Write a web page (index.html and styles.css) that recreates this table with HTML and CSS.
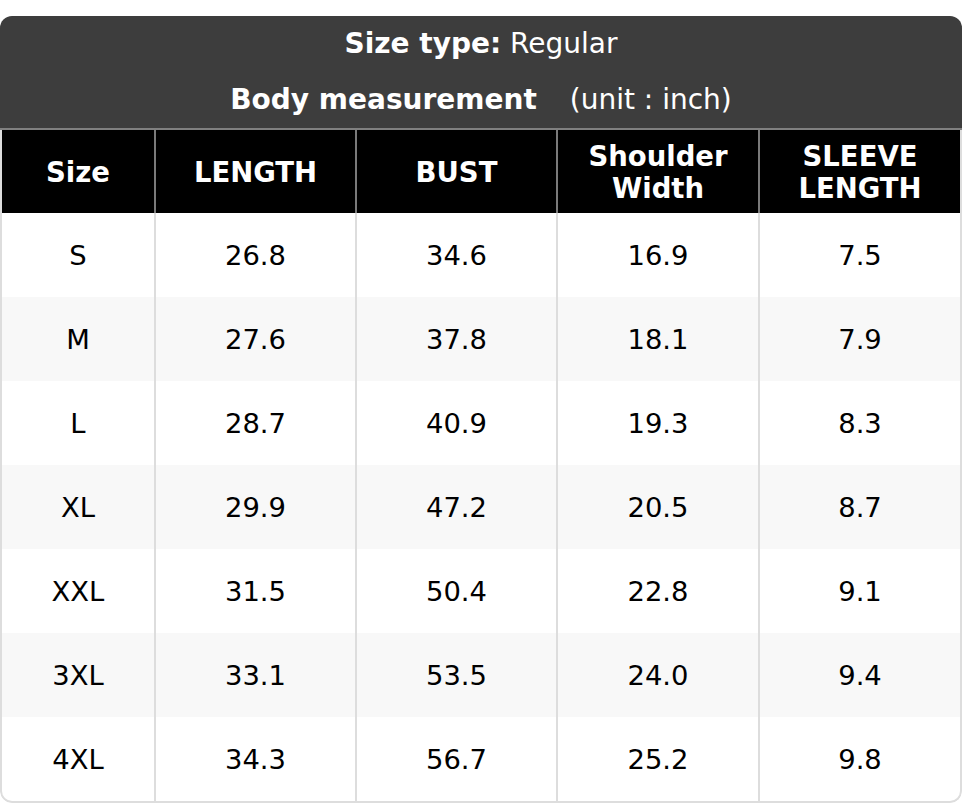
FILE: index.html
```html
<!DOCTYPE html>
<html lang="en">
<head>
<meta charset="utf-8">
<title>Size chart</title>
<link rel="stylesheet" href="styles.css">
</head>
<body>
<div class="chart">
  <div class="title">
    <div class="title-line"><b>Size type:</b> Regular</div>
    <div class="title-line"><b>Body measurement</b><span class="unit">(unit : inch)</span></div>
  </div>
  <div class="table-wrap">
    <table class="sizes">
      <colgroup>
        <col class="c-size">
        <col class="c-col">
        <col class="c-col">
        <col class="c-col-wide">
        <col class="c-col">
      </colgroup>
      <thead>
        <tr><th>Size</th><th>LENGTH</th><th>BUST</th><th>Shoulder<br>Width</th><th>SLEEVE<br>LENGTH</th></tr>
      </thead>
      <tbody>
        <tr><td>S</td><td>26.8</td><td>34.6</td><td>16.9</td><td>7.5</td></tr>
        <tr><td>M</td><td>27.6</td><td>37.8</td><td>18.1</td><td>7.9</td></tr>
        <tr><td>L</td><td>28.7</td><td>40.9</td><td>19.3</td><td>8.3</td></tr>
        <tr><td>XL</td><td>29.9</td><td>47.2</td><td>20.5</td><td>8.7</td></tr>
        <tr><td>XXL</td><td>31.5</td><td>50.4</td><td>22.8</td><td>9.1</td></tr>
        <tr><td>3XL</td><td>33.1</td><td>53.5</td><td>24.0</td><td>9.4</td></tr>
        <tr><td>4XL</td><td>34.3</td><td>56.7</td><td>25.2</td><td>9.8</td></tr>
      </tbody>
    </table>
  </div>
</div>
</body>
</html>
```
FILE: styles.css
```css
html, body {
  margin: 0;
  padding: 0;
  background: #ffffff;
}
body {
  padding-top: 16px;
  font-family: "DejaVu Sans", Verdana, sans-serif;
}
.chart {
  width: 962px;
  border-radius: 12px;
  overflow: hidden;
}
.title {
  background: #3d3d3d;
  color: #ffffff;
  text-align: center;
  font-size: 28px;
  border-bottom: 2px solid #808080;
}
.title-line {
  height: 56px;
  line-height: 56px;
}
.title b {
  font-weight: bold;
}
.unit {
  margin-left: 33px;
}
.table-wrap {
  border: 2px solid #dddddd;
  border-top: 0;
  border-radius: 0 0 12px 12px;
  overflow: hidden;
}
.sizes {
  width: 100%;
  border-collapse: collapse;
  table-layout: fixed;
}
.c-size { width: 153px; }
.c-col { width: 201px; }
.c-col-wide { width: 202px; }
.sizes th {
  background: #000000;
  color: #ffffff;
  font-size: 27.5px;
  font-weight: bold;
  line-height: 32px;
  height: 83px;
  padding: 0;
  text-align: center;
  vertical-align: middle;
}
.sizes th + th {
  border-left: 2px solid #7a7a7a;
}
.sizes td {
  font-size: 27.4px;
  color: #000000;
  height: 84px;
  padding: 0;
  text-align: center;
  vertical-align: middle;
}
.sizes td + td {
  border-left: 2px solid #dddddd;
}
.sizes tbody tr:nth-child(even) td {
  background: #f8f8f8;
}
```
